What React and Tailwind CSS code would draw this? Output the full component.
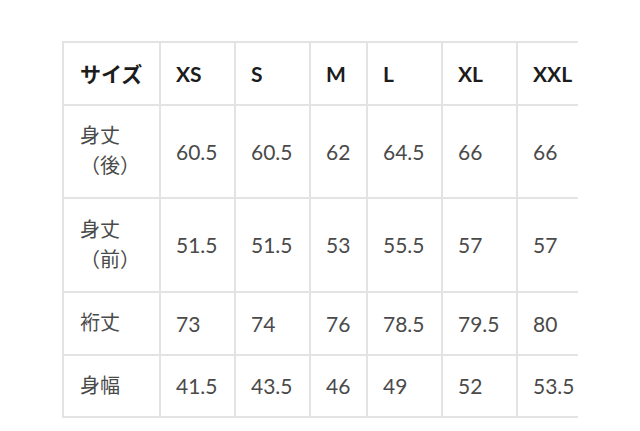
// App.jsx
const sizes = ["XS", "S", "M", "L", "XL", "XXL"];

const rows = [
  { label: ["身丈", "（後）"], h: "h-[93px]", values: ["60.5", "60.5", "62", "64.5", "66", "66"] },
  { label: ["身丈", "（前）"], h: "h-[94px]", values: ["51.5", "51.5", "53", "55.5", "57", "57"] },
  { label: ["裄丈"], h: "h-[63px]", values: ["73", "74", "76", "78.5", "79.5", "80"] },
  { label: ["身幅"], h: "h-[62px]", values: ["41.5", "43.5", "46", "49", "52", "53.5"] },
];

const font = "font-['Lato','Noto_Sans_CJK_JP',sans-serif]";

export default function App() {
  return (
    <div className={`min-h-[431px] w-[640px] overflow-hidden bg-white pl-[62px] pt-[41px] ${font}`}>
      <div className="grid w-[516px] grid-cols-[97px_75px_75px_57px_75px_75px_62px] border-b-2 border-[#e3e3e3]">
        <div className="flex h-[63px] items-center border-l-2 border-t-2 border-[#e3e3e3] pl-[16px] text-[21px] font-bold text-[#1c1c1c]">
          サイズ
        </div>
        {sizes.map((s) => (
          <div
            key={s}
            className="flex h-[63px] items-center border-l-2 border-t-2 border-[#e3e3e3] pl-[15px] text-[21px] font-bold text-[#1c1c1c]"
          >
            {s}
          </div>
        ))}

        {rows.map((row, i) => (
          <Row key={i} row={row} />
        ))}
      </div>
    </div>
  );
}

function Row({ row }) {
  return (
    <>
      <div
        className={`flex flex-col justify-center border-l-2 border-t-2 border-[#e3e3e3] pb-[3px] pl-[16px] text-[20px] leading-[30px] text-[#4a4a4a] ${row.h}`}
      >
        {row.label.map((l, i) => (
          <div key={i}>{l}</div>
        ))}
      </div>
      {row.values.map((v, i) => (
        <div
          key={i}
          className={`flex items-center border-l-2 border-t-2 border-[#e3e3e3] pl-[15px] text-[21px] text-[#4a4a4a] ${row.h}`}
        >
          {v}
        </div>
      ))}
    </>
  );
}
